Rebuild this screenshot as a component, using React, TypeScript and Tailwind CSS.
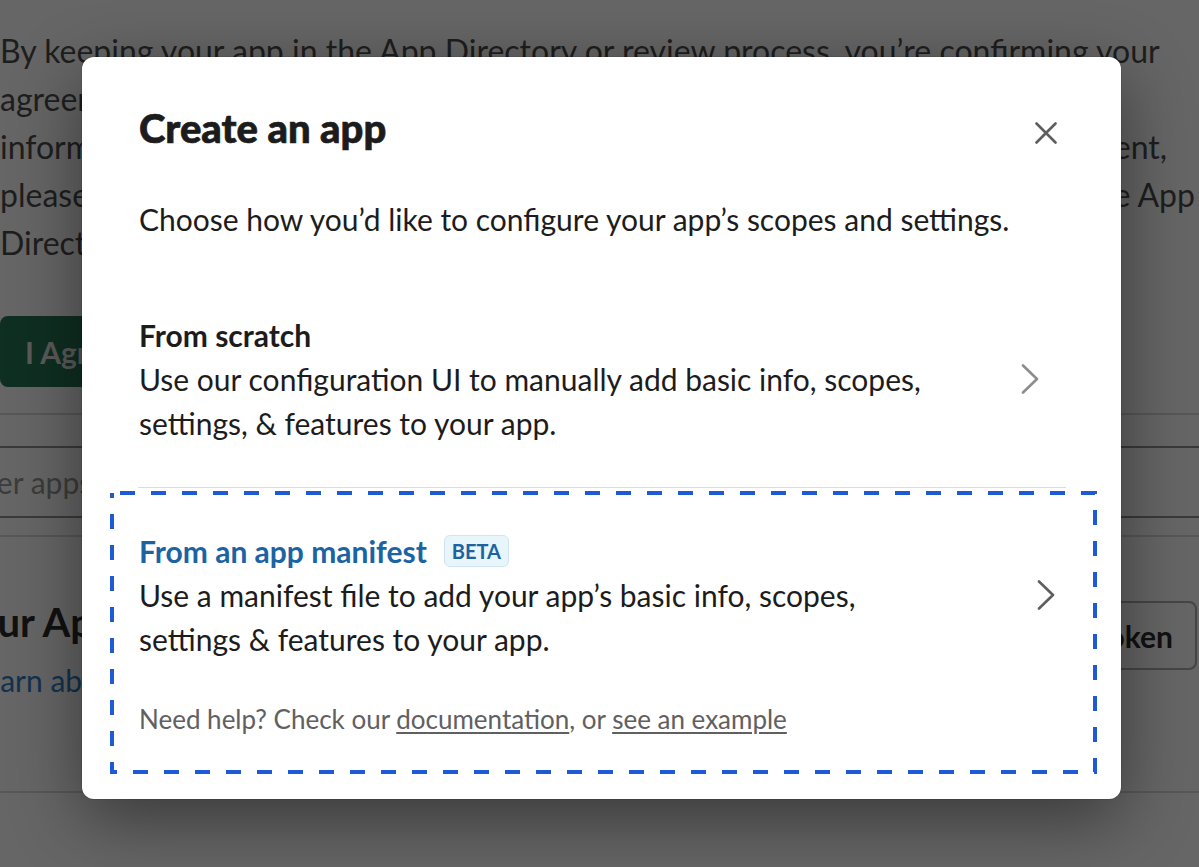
import React from "react";

function Chevron({ className }: { className: string }) {
  return (
    <svg width="18" height="30" viewBox="0 0 18 30" fill="none" className={className}>
      <path d="M2 1.5 L16 15 L2 28.5" stroke="currentColor" strokeWidth="2.6" strokeLinecap="round" strokeLinejoin="round" />
    </svg>
  );
}

function CloseIcon() {
  return (
    <svg width="22" height="22" viewBox="0 0 22 22" fill="none">
      <path d="M1.5 1.5 L20.5 20.5 M20.5 1.5 L1.5 20.5" stroke="currentColor" strokeWidth="2.6" strokeLinecap="round" />
    </svg>
  );
}

// focus ring drawn over the selected option
function FocusRing() {
  return (
    <svg className="pointer-events-none absolute -inset-[4px]" width="987" height="283" viewBox="0 0 987 283" fill="none">
      <rect x="2" y="2" width="983" height="279" stroke="#1f5ad6" strokeWidth="4" strokeDasharray="15 16" strokeDashoffset="-8" />
    </svg>
  );
}

function BackgroundPage() {
  return (
    <div className="h-full bg-[#666666] text-[#1e1e1e] overflow-hidden">
      <div className="pt-[27px] text-[32px] leading-[48px] whitespace-nowrap">
        <p>By keeping your app in the App Directory or review process, you’re confirming your</p>
        <p>agreement to the Slack App Developer Policy and the API Terms.</p>
        <div className="flex justify-between w-[1167px]">
          <span>information about how we use the data, see the updated agreement,</span>
          <span>ent,</span>
        </div>
        <div className="flex justify-between w-[1195px]">
          <span>please review the changes before your app returns to the</span>
          <span>e App</span>
        </div>
        <p>Directory.</p>
      </div>

      <button className="mt-[49px] h-[71px] w-[220px] rounded-[8px] bg-[#0f2f22] pl-[25px] text-left text-[30px] leading-[36px] font-bold text-[#5b5b5b]">
        I Agree
      </button>

      <div className="mt-[26px] h-[2px] bg-[#575757]" />
      <div className="mt-[31px] h-[72px] border-y-2 border-[#3a3a3a] flex items-center">
        <span className="ml-[-45px] text-[30px] leading-[36px] text-[#3c3c3c]">Filter apps</span>
      </div>
      <div className="mt-[17px] h-[2px] bg-[#575757]" />

      <div className="mt-[61px] flex items-start justify-between ml-[-47px] mr-[2px]">
        <div>
          <h2 className="text-[40px] leading-[48px] font-bold text-[#111111]">Your Apps</h2>
          <p className="mt-[12px] ml-[17px] text-[30px] leading-[44px] text-[#13324d]">Learn about tokens</p>
        </div>
        <button className="mt-[3px] h-[69px] rounded-[8px] border-2 border-[#464646] pl-[24px] pr-[22px] text-[30px] leading-[36px] font-bold text-[#111111]">
          Generate Token
        </button>
      </div>

      <div className="mt-[89px] h-[2px] bg-[#575757]" />
    </div>
  );
}

export default function App() {
  return (
    <div className="relative w-[1199px] h-[867px] overflow-hidden font-['Lato',sans-serif]">
      <BackgroundPage />

      <div className="absolute inset-0 pl-[82px] pt-[57px]">
        <div className="w-[1039px] h-[742px] rounded-[12px] bg-white text-[#1d1c1d] shadow-[0_0_0_1px_rgba(0,0,0,0.08),0_20px_70px_rgba(0,0,0,0.45)]">
          <div className="flex items-start justify-between pl-[57px] pr-[64px] pt-[47px]">
            <h1 className="text-[40px] leading-[48px] font-black [-webkit-text-stroke:0.7px_#1d1c1d]">Create an app</h1>
            <button className="mt-[18px] text-[#5e5e5e]" aria-label="Close">
              <CloseIcon />
            </button>
          </div>

          <p className="mt-[45px] px-[57px] text-[30px] leading-[44px]">
            Choose how you’d like to configure your app’s scopes and settings.
          </p>

          <div className="mt-[34px] ml-[28px] mr-[24px]">
            <div className="flex items-center pl-[29px] pr-[58px] pt-[38px] pb-[42px]">
              <div className="flex-1">
                <h3 className="text-[30px] leading-[44px] font-bold">From scratch</h3>
                <p className="max-w-[805px] text-[30px] leading-[44px]">
                  Use our configuration UI to manually add basic info, scopes, settings, &amp; features to your app.
                </p>
              </div>
              <Chevron className="text-[#8d8d8d]" />
            </div>

            <div className="ml-[28px] mr-[31px] h-px bg-[#dddddd]" />

            <div className="relative mt-[3px] border-4 border-transparent pl-[25px] pr-[38px] pt-[34px] pb-[35px]">
              <FocusRing />
              <div className="flex items-center">
                <div className="flex-1">
                  <div className="flex items-center">
                    <h3 className="text-[30px] leading-[44px] font-bold text-[#1c63a3]">From an app manifest</h3>
                    <span className="ml-[17px] flex h-[32px] items-center rounded-[6px] border border-[#cfe6f2] bg-[#e8f5fa] px-[7px] text-[20px] font-bold text-[#1c63a3]">
                      BETA
                    </span>
                  </div>
                  <p className="max-w-[805px] text-[30px] leading-[44px]">
                    Use a manifest file to add your app’s basic info, scopes, settings &amp; features to your app.
                  </p>
                </div>
                <Chevron className="text-[#5e5e5e]" />
              </div>
              <p className="mt-[42px] text-[26px] leading-[32px] text-[#616061]">
                Need help? Check our <a className="underline underline-offset-[3px]">documentation</a>, or{" "}
                <a className="underline underline-offset-[3px]">see an example</a>
              </p>
            </div>
          </div>
        </div>
      </div>
    </div>
  );
}
